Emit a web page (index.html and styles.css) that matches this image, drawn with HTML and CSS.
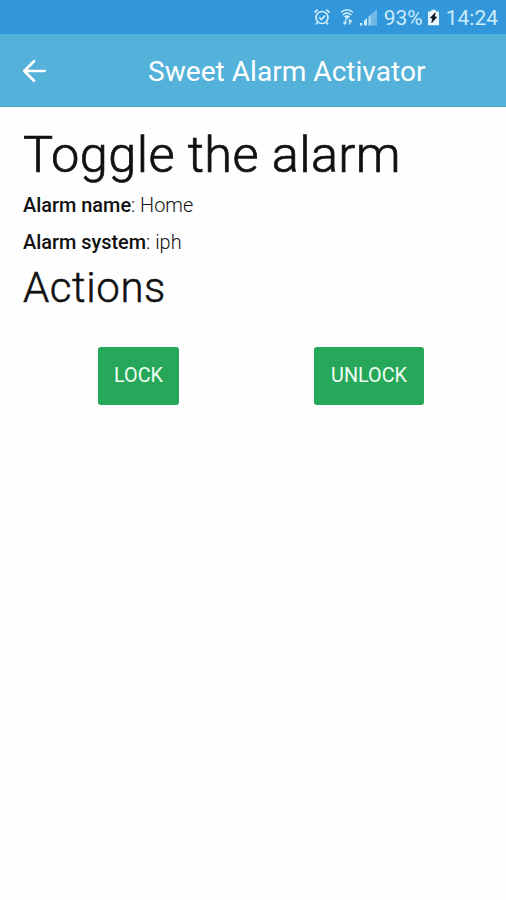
FILE: index.html
```html
<!DOCTYPE html>
<html lang="en">
<head>
<meta charset="utf-8">
<title>Sweet Alarm Activator</title>
<link rel="stylesheet" href="styles.css">
</head>
<body>
<div class="status">
  <svg class="alarm" width="18" height="18" viewBox="0 0 18 18" fill="none" stroke="currentColor" stroke-width="1.7">
    <circle cx="9" cy="9.5" r="6"/><path d="M1.5 4.5 4.8 1.6M16.5 4.5 13.2 1.6M4.6 14.2 3 16.5M13.4 14.2 15 16.5M6.2 9.3l2.2 2.2 3.6-3.8"/>
  </svg>
  <svg class="wifi" width="14" height="18" viewBox="0 0 14 18" fill="none" stroke="currentColor" stroke-width="1.5">
    <path d="M1 4.3Q7-.6 13 4.3M2.7 6.8Q7 3.2 11.3 6.8"/><path d="M3.8 8.3Q7 6 10.2 8.3L7 11.5z" fill="currentColor" stroke="none"/><path d="M5.6 11v5M3.5 14l2.1 2.4M9.6 16.5v-5M9.6 11.5l2.2 2.5"/>
  </svg>
  <svg class="signal" width="18" height="17" viewBox="0 0 18 17" fill="currentColor">
    <path d="M0 14h2.3v2.5H0zM4 11.7 7 9v7.5H4z"/><path d="M8.3 8 11 5.5v11H8.3z" opacity=".7"/><path d="M11 5.5 17 0v16.5h-6z" opacity=".4"/>
  </svg>
  <span class="percent">93%</span>
  <svg class="battery" width="11" height="17" viewBox="0 0 12 17">
    <path d="M3.5 0h5v2H12v15H0V2h3.5z" fill="#e8f7ff"/><path d="M7.8 3.5 2.7 9h2.5l-1 5L9.4 8H6.8z" fill="#101820" stroke="#101820"/>
  </svg>
  <span class="time">14:24</span>
</div>
<header class="bar">
  <svg class="back" width="24" height="24" viewBox="0 0 24 24" fill="none" stroke="#fff" stroke-width="2.7" stroke-linecap="round" stroke-linejoin="round"><path d="M22.6 12H2.5M12 2.3 2.3 12l9.7 9.7"/></svg>
  <span class="title">Sweet Alarm Activator</span>
</header>
<main class="content">
  <h1>Toggle the alarm</h1>
  <p><strong>Alarm name</strong>: Home</p>
  <p><strong>Alarm system</strong>: iph</p>
  <h2>Actions</h2>
  <div class="actions">
    <button class="btn lock">LOCK</button>
    <button class="btn unlock">UNLOCK</button>
  </div>
</main>
</body>
</html>
```
FILE: styles.css
```css
* { box-sizing: border-box; }
body { margin: 0; min-height: 900px; background: #fefefe; color: #111; font-family: Roboto, sans-serif; }
.status { height: 34px; background: #3296da; color: #ccecfb; display: flex; align-items: center; justify-content: flex-end; padding-right: 8px; font-size: 21px; line-height: 34px; }
.status svg { flex: none; }
.wifi { margin-left: 9px; }
.signal { margin-left: 6px; }
.percent { margin-left: 6px; padding-top: 2px; }
.battery { margin-left: 5px; }
.time { margin-left: 7px; padding-top: 2px; }
.bar { height: 73px; background: #54b2da; display: flex; align-items: center; padding-left: 22px; color: #fff; border-bottom: 1px solid #4caad2; }
.back { margin-top: 1px; }
.title { margin-left: 102px; padding-top: 3px; font-size: 28.1px; line-height: 36px; white-space: nowrap; }
.content { padding: 18px 23px 0; }
h1, h2 { margin: 0; font-weight: 300; white-space: nowrap; }
h1 { font-size: 50.5px; line-height: 60px; letter-spacing: .4px; -webkit-text-stroke: .7px #111; }
p { margin: 0 0 13px; font-size: 19.9px; line-height: 24px; font-weight: 300; }
h1 + p { margin-top: 9px; }
strong { font-weight: 500; }
h2 { font-size: 42px; line-height: 48px; margin-top: -4px; letter-spacing: .6px; -webkit-text-stroke: .5px #111; }
.actions { display: flex; margin-top: 35px; padding-left: 75px; gap: 135px; }
.btn { height: 58px; border: 0; border-radius: 3px; background: #27a75a; color: #f0fff4; font: 400 19.8px/24px Roboto, sans-serif; padding: 0 0 1px; flex: none; }
.lock { width: 81px; }
.unlock { width: 110px; }
```
